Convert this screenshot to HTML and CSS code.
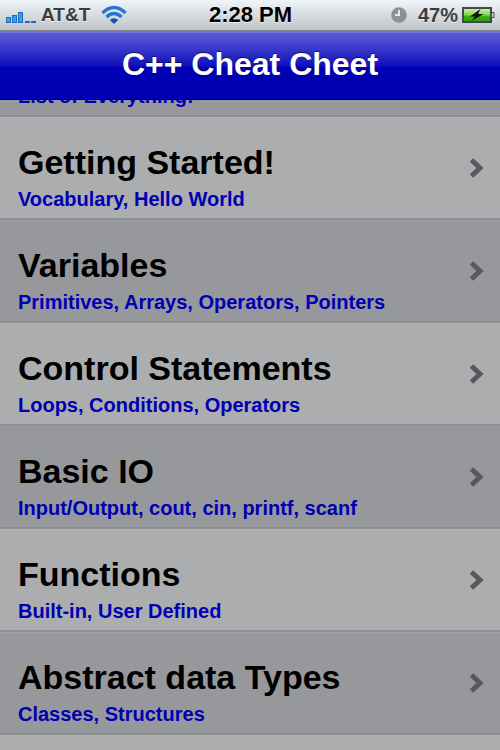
FILE: index.html
```html
<!DOCTYPE html>
<html lang="en">
<head>
    <meta charset="UTF-8">
    <meta name="viewport" content="width=device-width, initial-scale=1.0">
    <title>C++ Cheat Cheet</title>
    <link rel="stylesheet" href="styles.css">
</head>
<body>
<div class="status-bar">
    <div class="status-left">
        <svg class="signal" width="30" height="12" viewBox="0 0 30 12" aria-hidden="true">
            <g fill="#2fa4f4" stroke="#2467b8">
                <rect x="0.5" y="6.5" width="4" height="5"/>
                <rect x="6.5" y="4.5" width="4" height="7"/>
                <rect x="12.5" y="1.5" width="4" height="10"/>
            </g>
            <path d="M19 11h5M25 11h5" stroke="#2467b8" stroke-width="2"/>
        </svg>
        <span class="carrier">AT&amp;T</span>
        <svg class="wifi" width="26" height="20" viewBox="0 0 26 20" aria-hidden="true">
            <g fill="none" stroke="#2277d4" stroke-width="3.4">
                <path d="M1.500 8Q7 2.500 13 2.500T24.500 8"/>
                <path d="M5.500 12Q9 8.500 13 8.500T20.500 12"/>
            </g>
            <path d="M13 19L8.800 15Q13 11.500 17.200 15Z" fill="#1550b0"/>
        </svg>
    </div>
    <time class="clock">2:28 PM</time>
    <div class="status-right">
        <svg class="alarm" width="16" height="16" viewBox="0 0 16 16" aria-hidden="true">
            <circle cx="8" cy="8" r="7.800" fill="#8d9193"/>
            <path d="M8 3V8H4" fill="none" stroke="#e4e8ea" stroke-width="2"/>
        </svg>
        <span class="percent">47%</span>
        <svg class="battery" width="33" height="16" viewBox="0 0 33 16" aria-hidden="true">
            <defs>
                <linearGradient id="charge" x1="0" y1="0" x2="0" y2="1">
                    <stop offset="0" stop-color="#d2f3b5"/>
                    <stop offset="0.500" stop-color="#7fd648"/>
                    <stop offset="0.600" stop-color="#3fae10"/>
                    <stop offset="1" stop-color="#2f9a08"/>
                </linearGradient>
            </defs>
            <rect x="1" y="1" width="28" height="14" fill="url(#charge)" stroke="#40484b" stroke-width="2"/>
            <path d="M30 5.500h2v5h-2" fill="#d5dadc" stroke="#40484b"/>
            <path d="M18.500 2L8 9.500h5L9.500 14L21.500 7H16Z" fill="#111"/>
        </svg>
    </div>
</div>

<header class="nav-bar">
    <h1>C++ Cheat Cheet</h1>
</header>

<main class="content">
    <ul class="topics">
        <li>
            <a href="#everything" class="topic">
                <span class="topic-text">
                    <span class="topic-detail">List of Everything!</span>
                </span>
            </a>
        </li>
        <li>
            <a href="#getting-started" class="topic">
                <span class="topic-text">
                    <span class="topic-title">Getting Started!</span>
                    <span class="topic-detail">Vocabulary, Hello World</span>
                </span>
                <svg class="chevron" width="14" height="20" viewBox="0 0 14 20"><path d="M1.500 2l8.500 8l-8.500 8"/></svg>
            </a>
        </li>
        <li>
            <a href="#variables" class="topic">
                <span class="topic-text">
                    <span class="topic-title">Variables</span>
                    <span class="topic-detail">Primitives, Arrays, Operators, Pointers</span>
                </span>
                <svg class="chevron" width="14" height="20" viewBox="0 0 14 20"><path d="M1.500 2l8.500 8l-8.500 8"/></svg>
            </a>
        </li>
        <li>
            <a href="#control-statements" class="topic">
                <span class="topic-text">
                    <span class="topic-title">Control Statements</span>
                    <span class="topic-detail">Loops, Conditions, Operators</span>
                </span>
                <svg class="chevron" width="14" height="20" viewBox="0 0 14 20"><path d="M1.500 2l8.500 8l-8.500 8"/></svg>
            </a>
        </li>
        <li>
            <a href="#basic-io" class="topic">
                <span class="topic-text">
                    <span class="topic-title">Basic IO</span>
                    <span class="topic-detail">Input/Output, cout, cin, printf, scanf</span>
                </span>
                <svg class="chevron" width="14" height="20" viewBox="0 0 14 20"><path d="M1.500 2l8.500 8l-8.500 8"/></svg>
            </a>
        </li>
        <li>
            <a href="#functions" class="topic">
                <span class="topic-text">
                    <span class="topic-title">Functions</span>
                    <span class="topic-detail">Built-in, User Defined</span>
                </span>
                <svg class="chevron" width="14" height="20" viewBox="0 0 14 20"><path d="M1.500 2l8.500 8l-8.500 8"/></svg>
            </a>
        </li>
        <li>
            <a href="#abstract-data-types" class="topic">
                <span class="topic-text">
                    <span class="topic-title">Abstract data Types</span>
                    <span class="topic-detail">Classes, Structures</span>
                </span>
                <svg class="chevron" width="14" height="20" viewBox="0 0 14 20"><path d="M1.500 2l8.500 8l-8.500 8"/></svg>
            </a>
        </li>
    </ul>
</main>
</body>
</html>
```

FILE: styles.css
```css
* {
    box-sizing: border-box;
}

body {
    display: flex;
    flex-direction: column;
    height: 100vh;
    margin: 0;
    overflow: hidden;
    font-family: "Liberation Sans", Helvetica, Arial, sans-serif;
    font-weight: bold;
    background-color: #acadaf;
}

.status-bar {
    position: relative;
    z-index: 1;
    display: grid;
    grid-template-columns: 1fr auto 1fr;
    align-items: center;
    flex: none;
    height: 31px;
    padding: 0 5px 0 6px;
    border-bottom: 1px solid #81868b;
    background: linear-gradient(#eff5f8, #bdc3c6);
    color: #3c3c3c;
    text-shadow: 0 1px 0 rgba(255, 255, 255, 0.7);
}

.status-left,
.status-right {
    display: flex;
    align-items: center;
}

.status-right {
    justify-content: flex-end;
}

.signal {
    margin-top: 4px;
}

.carrier {
    margin: 0 11px 0 5px;
    font-size: 19px;
}

.clock {
    color: #000;
    font-size: 22px;
}

.percent {
    margin: 0 4px 0 11px;
    font-size: 20px;
}

.nav-bar {
    position: relative;
    z-index: 1;
    display: flex;
    align-items: center;
    justify-content: center;
    flex: none;
    height: 69px;
    padding-bottom: 4px;
    border-top: 2px solid #7373dc;
    border-bottom: 1px solid #000038;
    background: linear-gradient(#5c5cd6, #1010bc 50%, #0000b4 52%, #0000b2);
}

h1 {
    margin: 0;
    color: #fff;
    font-size: 32px;
    text-shadow: 0 -1px 0 rgba(0, 0, 0, 0.6);
}

.content {
    flex: 1;
    min-height: 0;
}

/* list is scrolled part way under the nav bar */
.topics {
    margin: -86px 0 0;
    padding: 0;
    list-style: none;
}

.topics li {
    border-top: 1px solid #b4b5b7;
    border-bottom: 2px solid #8c8d90;
    background-color: #acadaf;
}

.topics li:nth-child(odd) {
    border-top-color: #a0a1a4;
    background-color: #97989b;
}

.topic {
    display: flex;
    align-items: center;
    justify-content: space-between;
    height: 100px;
    padding: 0 16px 0 18px;
    text-decoration: none;
}

.topic-text {
    align-self: flex-end;
    padding-bottom: 7px;
}

.topic-title,
.topic-detail {
    display: block;
}

.topic-title {
    color: #000;
    font-size: 34px;
    line-height: 40px;
}

.topic-detail {
    margin-top: 5px;
    color: #0000b2;
    font-size: 20px;
    line-height: 24px;
}

.chevron {
    fill: none;
    stroke: #58595c;
    stroke-width: 5;
}
```
